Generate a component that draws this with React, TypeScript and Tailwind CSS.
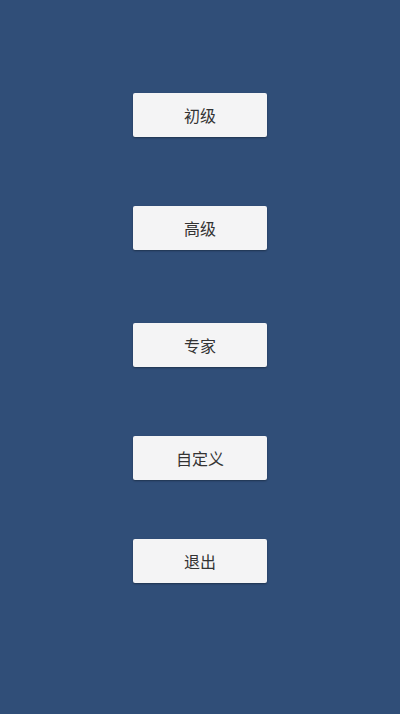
const levels = [
  { label: "初级", mt: "mt-[93px]" },
  { label: "高级", mt: "mt-[69px]" },
  { label: "专家", mt: "mt-[73px]" },
  { label: "自定义", mt: "mt-[69px]" },
  { label: "退出", mt: "mt-[59px]" },
];

export default function App() {
  return (
    <div
      className="flex h-[714px] w-full flex-col items-center bg-[#304e78]"
      style={{ fontFamily: '"Noto Sans CJK SC", "Noto Sans", sans-serif' }}
    >
      {levels.map((item) => (
        <button
          key={item.label}
          className={`${item.mt} flex h-[44px] w-[134px] items-center justify-center rounded-[2px] bg-[#f4f4f5] text-[16px] text-[#333333] shadow-[0_1px_2px_rgba(0,0,0,0.35)]`}
        >
          {item.label}
        </button>
      ))}
    </div>
  );
}
